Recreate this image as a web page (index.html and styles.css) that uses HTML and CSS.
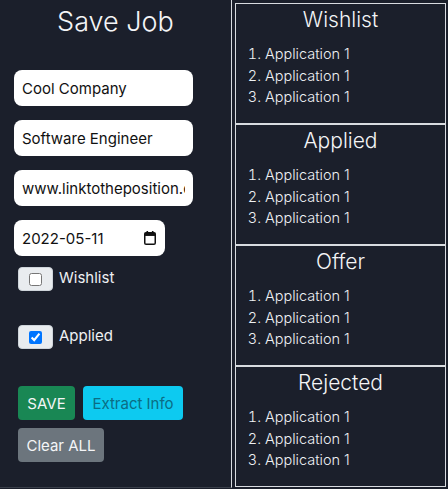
FILE: index.html
```html
<!DOCTYPE html>
<html>
<head>
<meta charset="utf-8">
<link rel="stylesheet" href="styles.css">
</head>
<body>
<div class="page">
  <div class="form-panel">
    <h1 class="title">Save Job</h1>
    <input class="field" type="text" value="Cool Company">
    <input class="field" type="text" value="Software Engineer">
    <input class="field" type="text" value="www.linktotheposition.com">
    <div class="date-wrap">
      <input class="field date" type="text" value="2022-05-11">
      <svg class="cal-icon" width="12" height="14" viewBox="0 0 12 14">
        <rect x="2.5" y="0" width="1.6" height="2.6" fill="#111"/>
        <rect x="7.9" y="0" width="1.6" height="2.6" fill="#111"/>
        <rect x="0.75" y="1.75" width="10.5" height="11.5" rx="1.3" fill="none" stroke="#111" stroke-width="1.5"/>
        <rect x="0.75" y="1.75" width="10.5" height="3.2" fill="#111"/>
      </svg>
    </div>
    <div class="check-row">
      <span class="check-box"><input type="checkbox"></span>
      <label class="check-label">Wishlist</label>
    </div>
    <div class="check-row second">
      <span class="check-box"><input type="checkbox" checked></span>
      <label class="check-label">Applied</label>
    </div>
    <div class="btn-row">
      <button class="btn btn-save">SAVE</button>
      <button class="btn btn-extract">Extract Info</button>
    </div>
    <div class="btn-row">
      <button class="btn btn-clear">Clear ALL</button>
    </div>
  </div>
  <div class="board">
    <div class="column">
      <h2 class="col-title">Wishlist</h2>
      <ol class="apps"><li>Application 1</li><li>Application 1</li><li>Application 1</li></ol>
    </div>
    <div class="column">
      <h2 class="col-title">Applied</h2>
      <ol class="apps"><li>Application 1</li><li>Application 1</li><li>Application 1</li></ol>
    </div>
    <div class="column">
      <h2 class="col-title">Offer</h2>
      <ol class="apps"><li>Application 1</li><li>Application 1</li><li>Application 1</li></ol>
    </div>
    <div class="column">
      <h2 class="col-title">Rejected</h2>
      <ol class="apps"><li>Application 1</li><li>Application 1</li><li>Application 1</li></ol>
    </div>
  </div>
</div>
</body>
</html>
```
FILE: styles.css
```css
html, body {
  margin: 0;
  padding: 0;
  background: #1b1f2b;
  font-family: "Inter", "Noto Sans", sans-serif;
  color: #eef0f3;
}
.page {
  display: flex;
  align-items: flex-start;
  width: 448px;
  height: 489px;
}
.form-panel {
  width: 232px;
  height: 488px;
  border-right: 1px solid #d8dbe0;
  border-bottom: 1px solid #3a3f4a;
  box-sizing: border-box;
  padding: 0 0 0 14px;
  display: flex;
  flex-direction: column;
  align-items: flex-start;
}
.title {
  align-self: stretch;
  margin: 0 0 26px -14px;
  font-size: 27px;
  font-weight: 300;
  line-height: 44px;
  text-align: center;
  color: #f4f5f7;
}
.field {
  width: 179px;
  height: 36px;
  box-sizing: border-box;
  border: none;
  border-radius: 8px;
  padding: 0 8px;
  margin: 0 0 14px 0;
  font-family: inherit;
  font-size: 15px;
  color: #111;
  background: #fff;
  outline: none;
}
.date-wrap {
  position: relative;
  width: 151px;
  height: 36px;
  margin-bottom: 11px;
}
.field.date {
  width: 151px;
  margin: 0;
}
.cal-icon {
  position: absolute;
  left: 130px;
  top: 11px;
}
.check-row {
  display: flex;
  align-items: flex-start;
  margin-left: 4px;
  height: 24px;
}
.check-row.second {
  margin-top: 34px;
}
.check-box {
  width: 35px;
  height: 24px;
  box-sizing: border-box;
  background: #e9ecef;
  border: 1px solid #ced4da;
  border-radius: 4px;
  display: flex;
  align-items: center;
  justify-content: center;
}
.check-box input {
  margin: 0;
  width: 13px;
  height: 13px;
}
.check-label {
  margin-left: 6px;
  font-size: 15px;
  line-height: 22px;
  color: #eef0f3;
}
.btn-row {
  display: flex;
  gap: 8px;
  margin-left: 4px;
}
.btn-row + .btn-row {
  margin-top: 8px;
}
.check-row.second + .btn-row {
  margin-top: 37px;
}
.btn {
  height: 34px;
  border: none;
  border-radius: 4px;
  font-family: inherit;
  font-size: 15px;
  padding: 0;
  color: #f4f5f7;
}
.btn-save { background: #198754; width: 57px; }
.btn-extract { background: #0dcaf0; color: #0b6d84; width: 100px; }
.btn-clear { background: #6c757d; width: 86px; }

.board {
  margin: 3px 0 0 3px;
  width: 211px;
  display: flex;
  flex-direction: column;
}
.column {
  height: 121px;
  box-sizing: border-box;
  border: 1px solid #d8dbe0;
}
.col-title {
  margin: 0;
  padding-top: 2px;
  font-size: 21px;
  font-weight: 300;
  line-height: 28px;
  text-align: center;
  color: #f4f5f7;
}
.apps {
  margin: 9px 0 0 0;
  padding-left: 29px;
  font-size: 14.5px;
  font-weight: 300;
  line-height: 21.5px;
  color: #eef0f3;
}
```
